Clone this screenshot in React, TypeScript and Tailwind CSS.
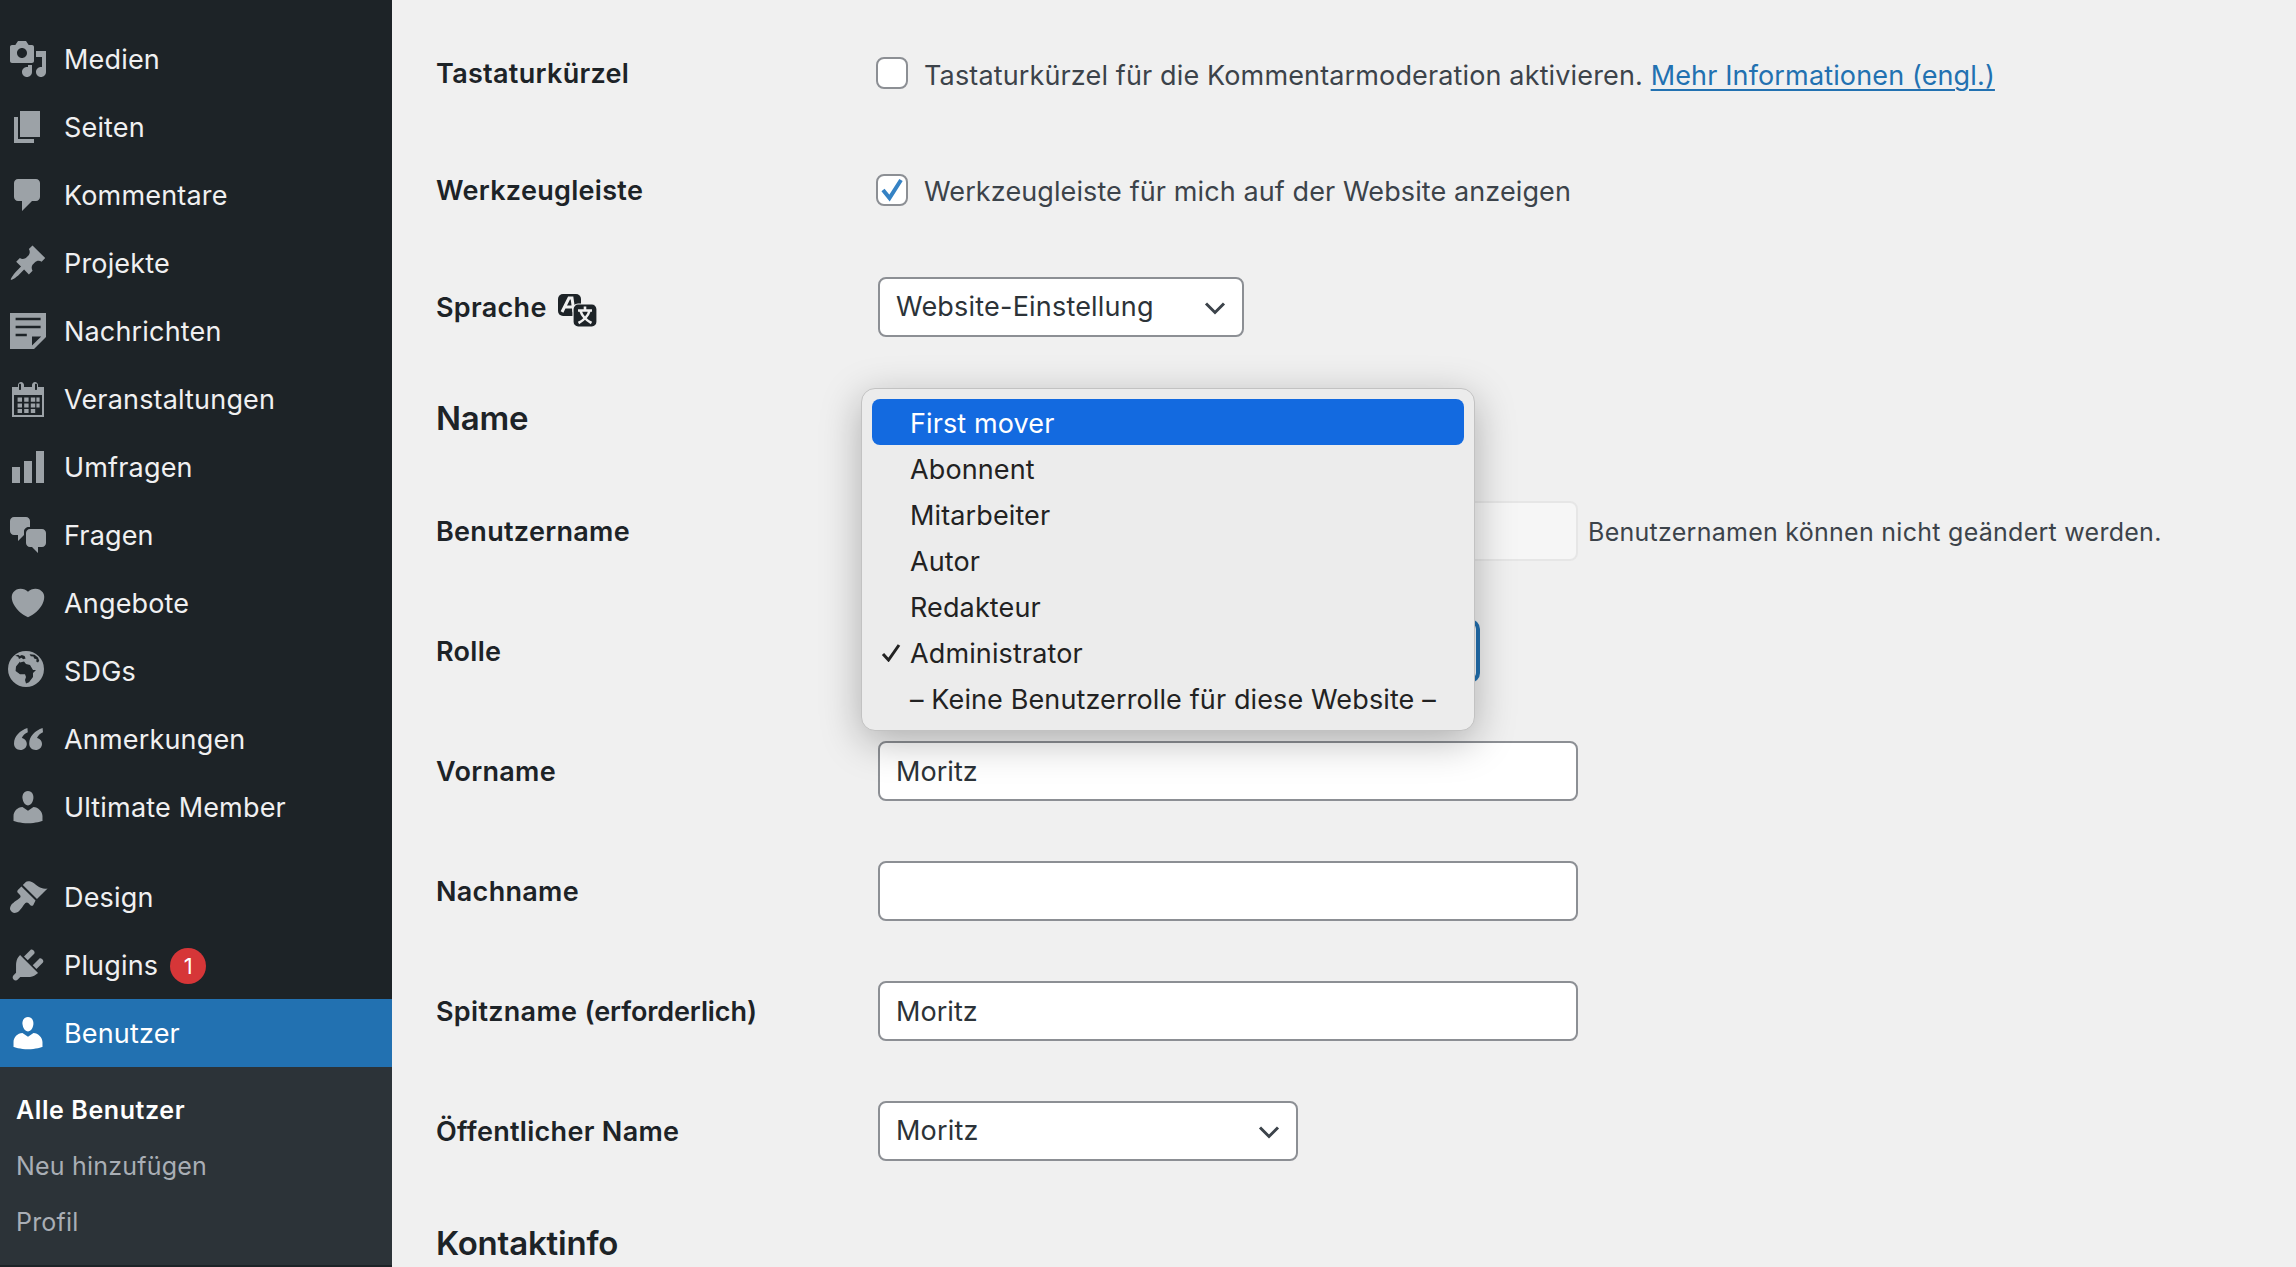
import React from "react";

const P: Record<string, string> = {
  media: "M13 11V4c0-.55-.45-1-1-1h-1.67L9 1H5L3.67 3H2c-.55 0-1 .45-1 1v7c0 .55.45 1 1 1h10c.55 0 1-.45 1-1zM7 4.5c1.38 0 2.5 1.12 2.5 2.5S8.38 9.5 7 9.5 4.5 8.38 4.5 7 5.62 4.5 7 4.5zM14 6h5v10.5c0 1.38-1.12 2.5-2.5 2.5S14 17.88 14 16.5s1.12-2.5 2.5-2.5c.17 0 .34.02.5.05V9h-3V6zm-4 8.05V13h2v3.5c0 1.38-1.12 2.5-2.5 2.5S7 17.88 7 16.5 8.12 14 9.5 14c.17 0 .34.02.5.05z",
  page: "M6 15V2h10v13H6zm-1 1h8v2H3V5h2v11z",
  comment: "M5 2h9c1.1 0 2 .9 2 2v7c0 1.1-.9 2-2 2h-2l-5 5v-5H5c-1.1 0-2-.9-2-2V4c0-1.1.9-2 2-2z",
  pin: "M10.44 3.02l1.82-1.82 6.36 6.35-1.83 1.82c-1.05-.68-2.48-.57-3.41.36l-.75.75c-.92.93-1.04 2.35-.35 3.41l-1.83 1.82-2.41-2.41-2.8 2.79c-.42.42-3.38 2.71-3.8 2.29s1.86-3.39 2.28-3.81l2.79-2.79L4.1 9.36l1.83-1.82c1.05.69 2.48.57 3.4-.36l.75-.75c.93-.92 1.05-2.35.36-3.41z",
  note: "M1 1h18v12l-6 6H1V1zM3.8 3.4v1.2h12.5V3.4H3.8zM3.8 7.4v1.2h12.5V7.4H3.8zM3.8 11.4v1.2h5.6v-1.2H3.8zM12 12.7v4.6l4.6-4.6H12z",
  cal: "M15 4h3v15H2V4h3V3c0-.41.15-.76.44-1.06.29-.29.65-.44 1.06-.44s.77.15 1.06.44c.29.3.44.65.44 1.06v1h4V3c0-.41.15-.76.44-1.06.29-.29.65-.44 1.06-.44s.77.15 1.06.44c.29.3.44.65.44 1.06v1zM6 5.5c.41 0 .5-.09.5-.5V2.9c0-.41-.09-.5-.5-.5s-.5.09-.5.5V5c0 .41.09.5.5.5zM14 5.5c.41 0 .5-.09.5-.5V2.9c0-.41-.09-.5-.5-.5s-.5.09-.5.5V5c0 .41.09.5.5.5zM3 18h14V8H3v10zM4.8 9.2h2.2v2.2H4.8zM8.1 9.2h2.2v2.2H8.1zM11.4 9.2h2.2v2.2h-2.2zM14.2 9.2h1.6v2.2h-1.6zM4.8 12.2h2.2v2H4.8zM8.1 12.2h2.2v2H8.1zM11.4 12.2h2.2v2h-2.2zM14.2 12.2h1.6v2h-1.6zM4.8 15h2.2v2H4.8zM8.1 15h2.2v2H8.1zM11.4 15h2.2v2h-2.2z",
  bars: "M18 18V2h-4v16h4zm-6 0V7H8v11h4zm-6 0v-8H2v8h4z",
  chat: "M11 6h-.82C9.07 6 8 7.2 8 8.16V10l-3 3v-3H3c-1.1 0-2-.9-2-2V3c0-1.1.9-2 2-2h6c1.1 0 2 .9 2 2v3zm0 1h6c1.1 0 2 .9 2 2v5c0 1.1-.9 2-2 2h-2v3l-3-3h-1c-1.1 0-2-.9-2-2V9c0-1.1.9-2 2-2z",
  heart: "M10 17.12c3.33-1.4 5.74-3.79 7.04-6.21 1.28-2.41 1.46-4.81.32-6.25-1.03-1.29-2.37-1.78-3.73-1.74s-2.68.63-3.63 1.46c-.95-.83-2.27-1.42-3.63-1.46s-2.7.45-3.73 1.74c-1.14 1.44-.96 3.84.34 6.25 1.28 2.42 3.69 4.81 7.02 6.21z",
  globe: "M9 0a9 9 0 1 1 0 18A9 9 0 0 1 9 0zM3.6 2.4l1.5.5.4 1.1 1.2-.6.9.7 1.2-.4-.5-1.2-1.4-.5-1 .5-.8-.6-1.5.5zM10.8 1.6l.6 1 1.3.2.4 1 1.2.3-.2 1.1.9.5.6-.8-.6-1.6-1.7-1.4-2.5-.3zM6 5.3L4 7.8 3.8 10 6 11.6l2.5 0 .5 1.4-.5 1.5.5 1.7 1.5-.6 2-2.6 0-2 1.5-1.5-1.5 0-1.5-2.5-2-.5-1-1.2-2 .5z",
  quote: "M9.7 4.5C6 5.8 3 8.5 3 12.3 3 14.3 4.4 15.5 6.2 15.5 8 15.5 9.4 14.2 9.4 12.5 9.4 10.9 8.2 9.7 6.9 9.5 7.4 8.2 8.6 7.2 9.9 6.6zM17.3 4.5C13.6 5.8 10.6 8.5 10.6 12.3 10.6 14.3 12 15.5 13.8 15.5 15.6 15.5 17 14.2 17 12.5 17 10.9 15.8 9.7 14.5 9.5 15 8.2 16.2 7.2 17.5 6.6z",
  user: "M10 9.25c-2.27 0-2.73-3.44-2.73-3.44C7 4.02 7.82 2 9.97 2c2.16 0 2.98 2.02 2.71 3.81 0 0-.41 3.44-2.68 3.44zm0 2.57L12.72 10c2.39 0 4.52 2.33 4.52 4.53v2.49s-3.65 1.13-7.24 1.13c-3.65 0-7.24-1.13-7.24-1.13v-2.49c0-2.25 1.94-4.48 4.47-4.48z",
  brush: "M14.48 11.06L7.41 3.99l1.5-1.5c.5-.56 2.3-.47 3.51.32 1.21.8 1.43 1.28 2.91 2.1 1.18.64 2.45 1.26 4.45.85zm-.71.71L6.7 4.7 4.93 6.47c-.39.39-.39 1.02 0 1.41l1.06 1.06c.39.39.39 1.03 0 1.42-.6.6-1.43 1.11-2.21 1.69-.35.26-.7.53-1.01.84C1.43 13.71 1 14.9 1 15.9c0 .83 1.27 2.1 2.1 2.1 1 0 2.19-.43 3.08-1.76.31-.31.58-.66.84-1.01.58-.78 1.09-1.61 1.69-2.21.39-.39 1.03-.39 1.42 0l1.06 1.06c.39.39 1.02.39 1.41 0z",
  plug: "M13.11 4.36L9.87 7.6 8 5.73l3.24-3.24c.35-.34 1.05-.2 1.56.32.52.51.66 1.21.31 1.55zm-8 1.77l.91-1.12 9.01 9.01-1.19.84c-.71.71-2.63 1.16-3.82 1.16H6.14L4.9 17.26c-.59.59-1.54.59-2.12 0-.59-.58-.59-1.53 0-2.12l1.24-1.24v-3.88c0-1.13.4-3.19 1.09-3.89zm7.26 3.97l3.24-3.24c.34-.35 1.04-.21 1.55.31.52.51.66 1.21.31 1.55l-3.24 3.25z",
};

function DashIcon({ d }: { d: string }) {
  return (
    <svg viewBox="0 0 20 20" className="h-10 w-10 shrink-0" fill="currentColor" fillRule="evenodd" clipRule="evenodd">
      <path d={d} />
    </svg>
  );
}

function MenuItem({ icon, label, badge, active }: { icon: string; label: string; badge?: string; active?: boolean }) {
  return (
    <div className={active ? "flex h-[68px] items-center pl-2 bg-[#2271b1] text-white" : "flex h-[68px] items-center pl-2 text-[#f0f0f1]"}>
      <span className={active ? "text-white" : "text-[#9ca2a7]"}>
        <DashIcon d={P[icon]} />
      </span>
      <span className="ml-[16px] text-[27px] leading-none tracking-[0.17px]">{label}</span>
      {badge && (
        <span className="ml-[12px] mt-[2px] flex h-9 w-9 items-center justify-center rounded-full bg-[#d63638] text-[22px] text-white">{badge}</span>
      )}
    </div>
  );
}

function Chevron() {
  return (
    <svg viewBox="0 0 22 14" className="pointer-events-none absolute right-[18px] top-[24px] h-[14px] w-[22px]" fill="none" stroke="#3c434a" strokeWidth="3">
      <path d="M2 2.5 11 11.5 20 2.5" />
    </svg>
  );
}

function Row({ label, h, children }: { label: React.ReactNode; h: string; children?: React.ReactNode }) {
  return (
    <div className={`flex items-center ${h}`}>
      <div className="mt-[3px] flex w-[442px] shrink-0 items-center text-[27px] font-semibold tracking-[0.3px] text-[#1d2327]">{label}</div>
      {children}
    </div>
  );
}

function TextInput({ value }: { value: string }) {
  return (
    <input
      readOnly
      value={value}
      className="h-[60px] w-[700px] rounded-lg border-2 border-[#8c8f94] bg-white px-4 text-[27px] tracking-[0.05px] text-[#2c3338] outline-none"
    />
  );
}

function SelectBox({ value, w }: { value: string; w: string }) {
  return (
    <div className={`relative h-[60px] ${w}`}>
      <select className="h-full w-full appearance-none rounded-lg border-2 border-[#8c8f94] bg-white px-4 text-[27px] tracking-[0.2px] text-[#2c3338] outline-none">
        <option>{value}</option>
      </select>
      <Chevron />
    </div>
  );
}

function TranslateIcon() {
  return (
    <svg viewBox="0 0 40 34" className="ml-[10px] mt-[5px] h-[34px] w-[40px]">
      <rect x="1" y="0" width="23" height="22" rx="5" fill="#1d2327" />
      <path d="M5 18 12 4h3l2 14M8.5 13h7.5" fill="none" stroke="#f0f0f0" strokeWidth="3" />
      <rect x="16" y="10" width="24" height="23" rx="5" fill="#1d2327" stroke="#f0f0f0" strokeWidth="1.2" />
      <path d="M21 16.5h14M28 12.5v4M23.5 17c1.5 5 5.5 9 11 12M32.5 17c-1.5 5-5.5 9-11 12" fill="none" stroke="#f0f0f0" strokeWidth="2.6" />
    </svg>
  );
}

const options = ["Abonnent", "Mitarbeiter", "Autor", "Redakteur", "Administrator", "– Keine Benutzerrolle für diese Website –"];

function RoleMenu() {
  return (
    <div className="absolute left-[469px] top-[388px] z-10 flex h-[343px] w-[614px] flex-col rounded-[14px] border border-[#c2c2c2] bg-[#ececec] px-[10px] pt-[10px] text-[27px] tracking-[0.12px] text-[#222222] shadow-[0_10px_40px_rgba(0,0,0,0.28)]">
      <div className="flex h-[46px] shrink-0 items-center rounded-lg bg-[#136ae0] pl-[38px] pt-[4px] text-white">First mover</div>
      {options.map((o) => (
        <div key={o} className="relative flex h-[46px] shrink-0 items-center pl-[38px] pt-[4px]">
          {o === "Administrator" && (
            <svg viewBox="0 0 20 18" className="absolute left-[9px] top-[15px] h-[18px] w-[20px]" fill="none" stroke="#222222" strokeWidth="3">
              <path d="M2 10 7.5 16 18 1" />
            </svg>
          )}
          {o}
        </div>
      ))}
    </div>
  );
}

export default function App() {
  return (
    <div className="flex h-[1267px] w-[2296px] overflow-hidden bg-[#f0f0f0] [font-family:Inter,'Liberation_Sans',sans-serif]">
      <aside className="flex h-full w-[392px] shrink-0 flex-col bg-[#1d2327] pt-[25px]">
        <MenuItem icon="media" label="Medien" />
        <MenuItem icon="page" label="Seiten" />
        <MenuItem icon="comment" label="Kommentare" />
        <MenuItem icon="pin" label="Projekte" />
        <MenuItem icon="note" label="Nachrichten" />
        <MenuItem icon="cal" label="Veranstaltungen" />
        <MenuItem icon="bars" label="Umfragen" />
        <MenuItem icon="chat" label="Fragen" />
        <MenuItem icon="heart" label="Angebote" />
        <MenuItem icon="globe" label="SDGs" />
        <MenuItem icon="quote" label="Anmerkungen" />
        <MenuItem icon="user" label="Ultimate Member" />
        <div className="h-[22px] shrink-0" />
        <MenuItem icon="brush" label="Design" />
        <MenuItem icon="plug" label="Plugins" badge="1" />
        <MenuItem icon="user" label="Benutzer" active />
        <div className="flex h-[198px] shrink-0 flex-col bg-[#2c3338] pb-[14px] pl-[16px] pt-[16px] text-[25px] tracking-[0.2px] text-[#a9aeb5]">
          <div className="flex h-[56px] items-center font-semibold tracking-[0.6px] text-white">Alle Benutzer</div>
          <div className="flex h-[56px] items-center">Neu hinzufügen</div>
          <div className="flex h-[56px] items-center">Profil</div>
        </div>
      </aside>

      <main className="relative flex-1 pl-[44px] pt-[14px]">
        <Row label="Tastaturkürzel" h="h-[118px]">
          <div className="-ml-[2px] flex items-center gap-[16px] text-[27px] tracking-[0.14px] text-[#3c434a]">
            <input type="checkbox" readOnly className="h-8 w-8 appearance-none rounded-lg border-2 border-[#8c8f94] bg-white" />
            <span className="mt-[6px]">
              Tastaturkürzel für die Kommentarmoderation aktivieren.{" "}
              <a className="text-[#2271b1] underline decoration-2 underline-offset-[4px]">Mehr Informationen (engl.)</a>
            </span>
          </div>
        </Row>
        <Row label="Werkzeugleiste" h="h-[116px]">
          <div className="-ml-[2px] flex items-center gap-[16px] text-[27px] tracking-[0.1px] text-[#3c434a]">
            <div className="relative h-8 w-8">
              <input type="checkbox" readOnly className="h-8 w-8 appearance-none rounded-lg border-2 border-[#8c8f94] bg-white" />
              <svg viewBox="0 0 32 32" className="absolute inset-0 h-8 w-8" fill="none" stroke="#3582c4" strokeWidth="4">
                <path d="M7 16 13.5 24 25 6" />
              </svg>
            </div>
            <span className="mt-[4px]">Werkzeugleiste für mich auf der Website anzeigen</span>
          </div>
        </Row>
        <Row label={<>Sprache<TranslateIcon /></>} h="h-[118px]">
          <SelectBox value="Website-Einstellung" w="w-[366px]" />
        </Row>
        <div className="mt-[1px] flex h-[104px] items-center text-[33px] font-semibold tracking-[-0.2px] text-[#1d2327]">Name</div>
        <Row label="Benutzername" h="h-[120px]">
          <input readOnly className="h-[60px] w-[700px] rounded-lg border-2 border-[#e6e6e6] bg-[#f6f6f6] outline-none" />
          <span className="ml-[10px] mt-[3px] text-[25px] tracking-[0.27px] text-[#3c434a]">Benutzernamen können nicht geändert werden.</span>
        </Row>
        <Row label="Rolle" h="h-[120px]">
          <div className="h-[60px] w-[600px] rounded-lg border-2 border-[#2271b1] bg-white shadow-[0_0_0_2px_#2271b1]" />
        </Row>
        <Row label="Vorname" h="h-[120px]"><TextInput value="Moritz" /></Row>
        <Row label="Nachname" h="h-[120px]"><TextInput value="" /></Row>
        <Row label={<>Spitzname&nbsp;<span className="tracking-[-0.1px]">(erforderlich)</span></>} h="h-[120px]"><TextInput value="Moritz" /></Row>
        <Row label="Öffentlicher Name" h="h-[120px]">
          <SelectBox value="Moritz" w="w-[420px]" />
        </Row>
        <div className="mt-[2px] flex h-[102px] items-center text-[33px] font-semibold tracking-[-0.2px] text-[#1d2327]">Kontaktinfo</div>
        <RoleMenu />
      </main>
    </div>
  );
}
